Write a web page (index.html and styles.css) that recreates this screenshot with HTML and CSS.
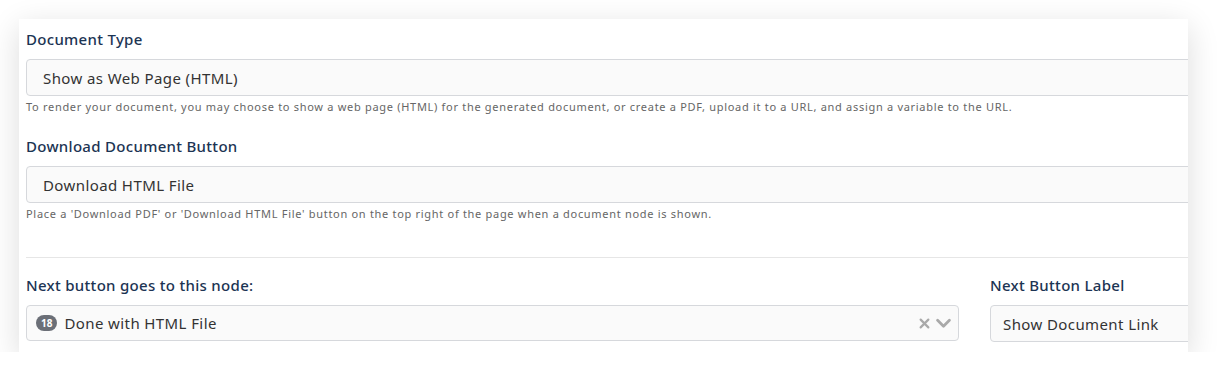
FILE: index.html
```html
<!DOCTYPE html>
<html lang="en">
<head>
    <meta charset="UTF-8">
    <title>Document Node Settings</title>
    <link rel="stylesheet" href="styles.css">
</head>
<body>
    <div class="card">
        <div class="field">
            <label class="field-label">Document Type</label>
            <div class="input">Show as Web Page (HTML)</div>
            <p class="help">To render your document, you may choose to show a web page (HTML) for the generated document, or create a PDF, upload it to a URL, and assign a variable to the URL.</p>
        </div>

        <div class="field">
            <label class="field-label">Download Document Button</label>
            <div class="input">Download HTML File</div>
            <p class="help">Place a 'Download PDF' or 'Download HTML File' button on the top right of the page when a document node is shown.</p>
        </div>

        <hr class="divider">

        <div class="row">
            <div class="field node-field">
                <label class="field-label">Next button goes to this node:</label>
                <div class="select">
                    <span class="badge">18</span>
                    <span class="select-value">Done with HTML File</span>
                    <span class="select-icons">
                        <svg width="11" height="11" viewBox="0 0 10 10"><path d="M1.5 1.5 L8.5 8.5 M8.5 1.5 L1.5 8.5" stroke="#a9a9a9" stroke-width="2" stroke-linecap="round"/></svg>
                        <svg width="15" height="11" viewBox="0 0 14 10"><path d="M1.5 2 L7 7.5 L12.5 2" fill="none" stroke="#a9a9a9" stroke-width="2.6" stroke-linecap="round" stroke-linejoin="round"/></svg>
                    </span>
                </div>
            </div>
            <div class="field label-field">
                <label class="field-label">Next Button Label</label>
                <div class="input compact">Show Document Link</div>
            </div>
        </div>
    </div>
</body>
</html>
```

FILE: styles.css
```css
/* General Styles */
body {
    margin: 0;
    background: #ffffff;
    font-family: "Noto Sans", Arial, sans-serif;
    color: #333;
}

.card {
    margin: 19px 0 0 19px;
    width: 1162px;
    height: 323px;
    padding: 10px 0 0 7px;
    background: #fff;
    box-shadow: 0 8px 30px rgba(0, 0, 0, 0.14);
    overflow: hidden;
}

.field-label {
    display: block;
    font-size: 15px;
    line-height: 20px;
    font-weight: 500;
    letter-spacing: 0.3px;
    color: #1c3453;
    margin-bottom: 10px;
}

.input {
    box-sizing: border-box;
    height: 37px;
    width: calc(100% + 20px);
    padding: 0 16px;
    display: flex;
    align-items: center;
    background: #fafafa;
    border: 1px solid #d6d8dc;
    border-radius: 4px;
    font-size: 15px;
    letter-spacing: 0.4px;
    color: #333;
}

.input.compact {
    padding: 0 12px;
}

.help {
    margin: 3px 0 0;
    font-size: 11px;
    line-height: 16px;
    letter-spacing: 0.7px;
    color: #666;
}

.field + .field {
    margin-top: 21px;
}

/* Divider and bottom row */
.divider {
    border: none;
    border-top: 1px solid #e6e6e6;
    margin: 35px 0 17px;
}

.row {
    display: flex;
    gap: 31px;
}

.row .field + .field {
    margin-top: 0;
}

.node-field {
    width: 933px;
    flex-shrink: 0;
}

.label-field {
    flex: 1;
}

.select {
    box-sizing: border-box;
    height: 36px;
    display: flex;
    align-items: center;
    padding: 0 7px 0 9px;
    background: #fafafa;
    border: 1px solid #d6d8dc;
    border-radius: 4px;
    font-size: 15px;
    letter-spacing: 0.4px;
}

.badge {
    background: #6b6f77;
    color: #fff;
    font-size: 10px;
    font-weight: 700;
    letter-spacing: 0;
    line-height: 16px;
    padding: 0 5px;
    border-radius: 8px;
    margin-right: 7px;
}

.select-value {
    flex: 1;
}

.select-icons {
    display: flex;
    align-items: center;
    gap: 6px;
}
```
